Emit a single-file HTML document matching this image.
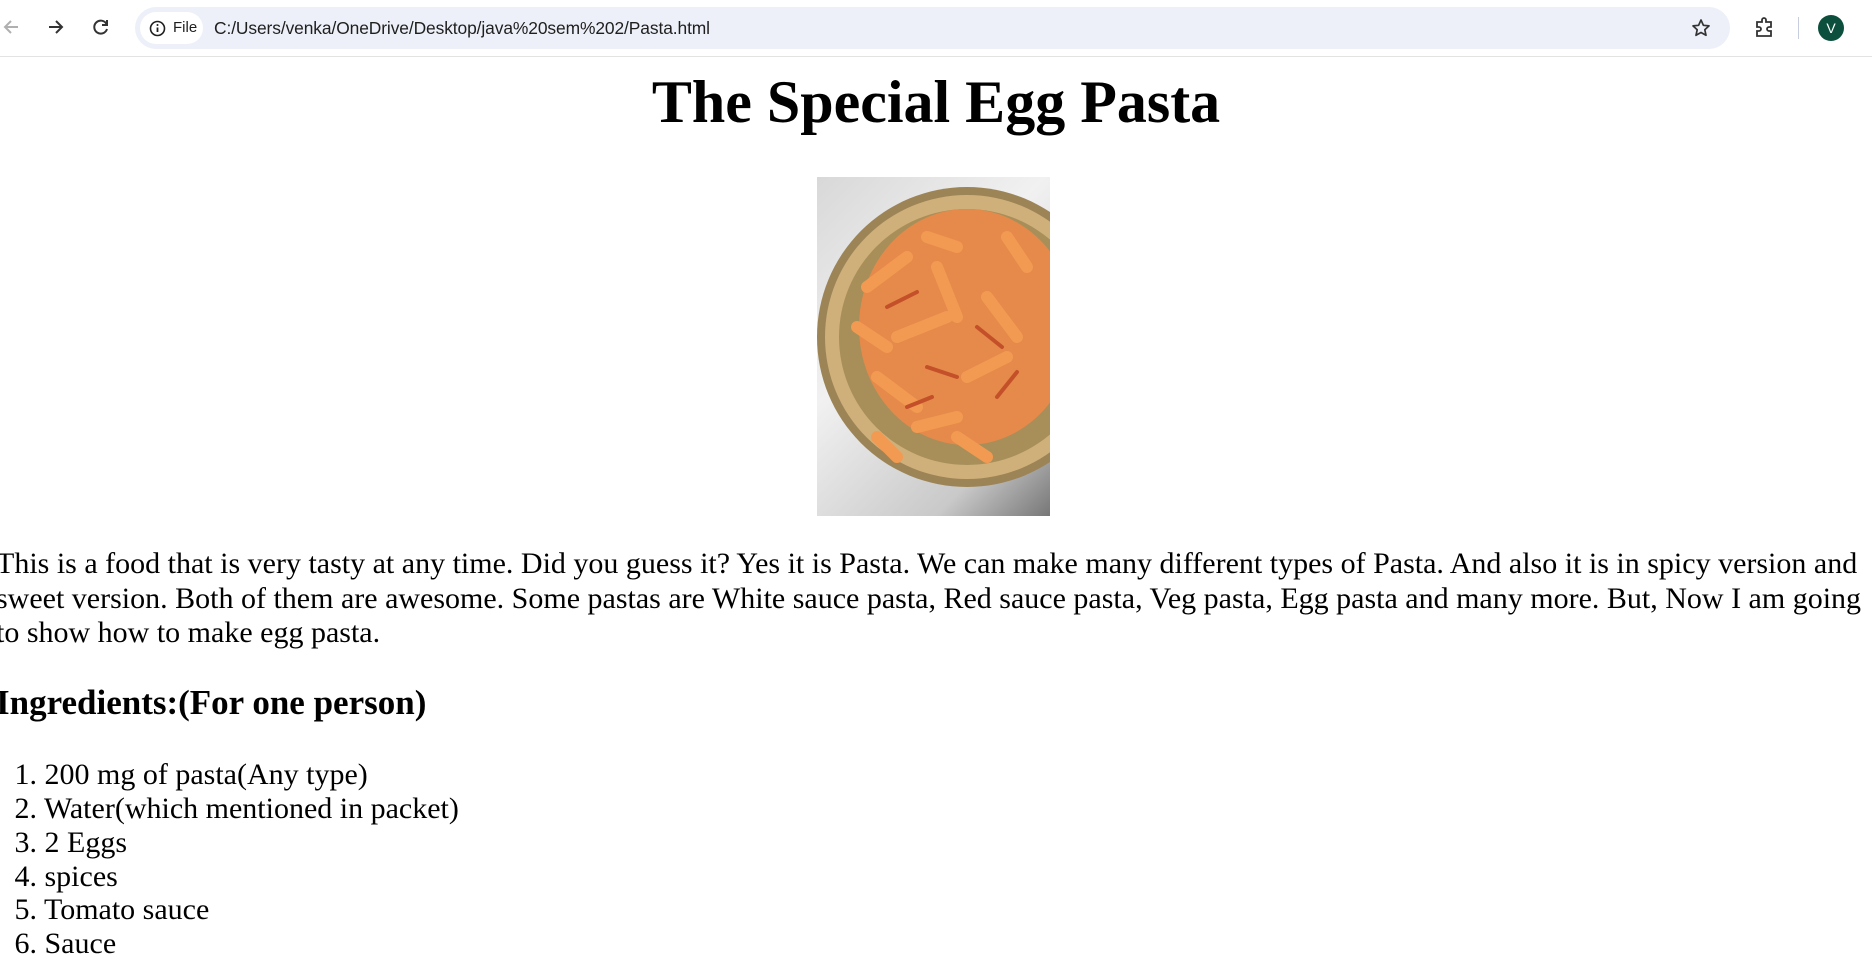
<!DOCTYPE html>
<html><head><meta charset="utf-8">
<style>
html,body{margin:0;padding:0;width:1872px;height:941px;overflow:hidden;background:#fff;font-family:"Liberation Serif",serif;color:#000}
.bar{position:absolute;left:0;top:0;width:1872px;height:56px;background:#fff;border-bottom:1px solid #e3e3e3}
.omni{position:absolute;left:135px;top:7px;width:1595px;height:42px;background:#edf0f8;border-radius:21px}
.chip{position:absolute;left:5px;top:5px;width:63px;height:32px;background:#fff;border-radius:16px}
.chip span{position:absolute;left:33px;top:7px;font:15px "Liberation Sans",sans-serif;color:#1f1f1f}
.url{position:absolute;left:79px;top:11px;font:17.4px "Liberation Sans",sans-serif;color:#1f1f1f;letter-spacing:-0.1px}
.abs{position:absolute;white-space:nowrap}
h1{position:absolute;margin:0;left:0;width:1872px;text-align:center;top:68px;font-size:60px;line-height:69px;font-weight:bold}
.img{position:absolute;left:817px;top:177px;width:233px;height:339px;background:linear-gradient(135deg,#d8d8d8,#f1f1f1 40%,#c9c9c9 80%,#777);overflow:hidden}
p{position:absolute;margin:0;left:-4px;top:547px;font-size:30px;line-height:34.5px;white-space:nowrap}
h2{position:absolute;margin:0;left:-4px;top:683px;font-size:35px;line-height:40px;font-weight:bold;white-space:nowrap}
.li{position:absolute;left:0;font-size:30px;line-height:34px;white-space:nowrap}
.li b{font-weight:normal;display:inline-block;width:37px;text-align:right}
</style></head><body>
<div class="bar">
<svg class="abs" style="left:2px;top:17px" width="20" height="20" viewBox="0 0 20 20"><path d="M16 10H4M9 4l-6 6 6 6" stroke="#b0b0b0" stroke-width="2" fill="none"/></svg>
<svg class="abs" style="left:45px;top:17px" width="20" height="20" viewBox="0 0 20 20"><path d="M4 10h12M11 4l6 6-6 6" stroke="#333" stroke-width="2" fill="none"/></svg>
<svg class="abs" style="left:91px;top:17px" width="20" height="20" viewBox="0 0 20 20"><path d="M15.5 7A6.5 6.5 0 1 0 16 12" stroke="#333" stroke-width="2" fill="none"/><path d="M16 3v5h-5" stroke="#333" stroke-width="2" fill="none"/></svg>
<div class="omni"><div class="chip">
<svg class="abs" style="left:9px;top:8px" width="17" height="17" viewBox="0 0 17 17"><circle cx="8.5" cy="8.5" r="7" stroke="#1f1f1f" stroke-width="1.6" fill="none"/><path d="M8.5 7.5v4.5" stroke="#1f1f1f" stroke-width="1.8"/><circle cx="8.5" cy="5" r="1" fill="#1f1f1f"/></svg>
<span>File</span></div>
<div class="url">C:/Users/venka/OneDrive/Desktop/java%20sem%202/Pasta.html</div>
<svg class="abs" style="left:1556px;top:11px" width="20" height="20" viewBox="0 0 20 20"><path d="M10 2l2.4 5.3 5.6.6-4.2 3.8 1.2 5.6L10 14.5l-5 2.8 1.2-5.6L2 7.9l5.6-.6z" stroke="#333" stroke-width="1.7" fill="none" stroke-linejoin="round"/></svg>
</div>
<svg class="abs" style="left:1754px;top:16px" width="22" height="22" viewBox="0 0 22 22"><path d="M3 6h5V4a2 2 0 0 1 4 0v2h5v5h-2a2 2 0 0 0 0 4h2v5H3v-5h2a2 2 0 0 0 0-4H3z" stroke="#333" stroke-width="1.8" fill="none"/></svg>
<div class="abs" style="left:1798px;top:17px;width:1px;height:22px;background:#c8cde0"></div>
<div class="abs" style="left:1818px;top:15px;width:26px;height:26px;border-radius:13px;background:#0b4f3c;color:#fff;font:14px 'Liberation Sans',sans-serif;text-align:center;line-height:26px">V</div>
</div>
<h1>The Special Egg Pasta</h1>
<div class="img">
<svg width="233" height="339" viewBox="0 0 233 339">
<circle cx="150" cy="160" r="150" fill="#9c8456"/>
<circle cx="150" cy="160" r="142" fill="#cfb07a"/>
<circle cx="150" cy="160" r="128" fill="#a88f5a"/>
<ellipse cx="150" cy="150" rx="108" ry="118" fill="#e58a4a"/>
<g stroke="#f29a52" stroke-width="12" stroke-linecap="round">
<path d="M50 110l40-30M80 160l50-20M60 200l40 30M120 90l20 50M150 200l40-20M170 120l30 40M100 250l40-10M190 60l20 30M40 150l30 20M140 260l30 20M110 60l30 10M60 260l20 20"/></g>
<g stroke="#c4502a" stroke-width="4" stroke-linecap="round">
<path d="M70 130l30-15M110 190l30 10M160 150l25 20M90 230l25-10M180 220l20-25"/></g>
</svg></div>
<p>This is a food that is very tasty at any time. Did you guess it? Yes it is Pasta. We can make many different types of Pasta. And also it is in spicy version and<br>sweet version. Both of them are awesome. Some pastas are White sauce pasta, Red sauce pasta, Veg pasta, Egg pasta and many more. But, Now I am going<br>to show how to make egg pasta.</p>
<h2>Ingredients:(For one person)</h2>
<div class="li" style="top:758px"><b>1.</b> 200 mg of pasta(Any type)</div>
<div class="li" style="top:792px"><b>2.</b> Water(which mentioned in packet)</div>
<div class="li" style="top:826px"><b>3.</b> 2 Eggs</div>
<div class="li" style="top:860px"><b>4.</b> spices</div>
<div class="li" style="top:893px"><b>5.</b> Tomato sauce</div>
<div class="li" style="top:927px"><b>6.</b> Sauce</div>
</body></html>
